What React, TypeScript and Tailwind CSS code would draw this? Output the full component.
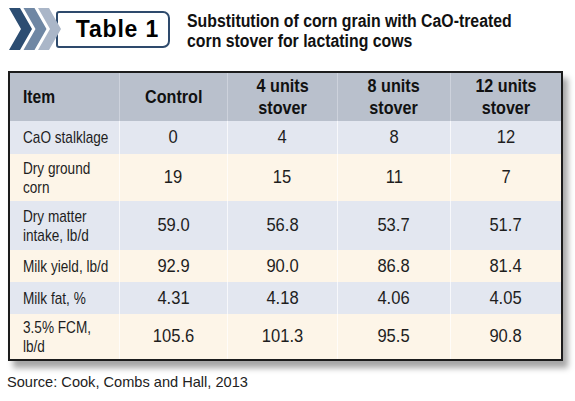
const rows = [
  { item: ["CaO stalklage"], vals: ["0", "4", "8", "12"], h: "h-[33px]", bg: "bg-[#e3e7f0]" },
  { item: ["Dry ground", "corn"], vals: ["19", "15", "11", "7"], h: "h-[47px]", bg: "bg-[#fdf5e8]" },
  { item: ["Dry matter", "intake, lb/d"], vals: ["59.0", "56.8", "53.7", "51.7"], h: "h-[49px]", bg: "bg-[#e3e7f0]" },
  { item: ["Milk yield, lb/d"], vals: ["92.9", "90.0", "86.8", "81.4"], h: "h-[32px]", bg: "bg-[#fdf5e8]" },
  { item: ["Milk fat, %"], vals: ["4.31", "4.18", "4.06", "4.05"], h: "h-[32px]", bg: "bg-[#e3e7f0]" },
  { item: ["3.5% FCM,", "lb/d"], vals: ["105.6", "101.3", "95.5", "90.8"], h: "h-[45px]", bg: "bg-[#fdf5e8]" },
]

const heads = [["Control"], ["4 units", "stover"], ["8 units", "stover"], ["12 units", "stover"]]

const cols = "grid grid-cols-[110px_108px_110px_113px_110px]"

function Chevrons() {
  return (
    <svg width="64" height="44" viewBox="0 0 64 44" className="relative z-10 shrink-0">
      {["#2c4d72", "#6f87a4", "#aab6c8"].map((c, i) => {
        const x = 1 + i * 14.5
        return (
          <polygon
            key={c}
            points={`${x},1 ${x + 11},1 ${x + 23},22 ${x + 11},43 ${x},43 ${x + 12},22`}
            fill={c}
          />
        )
      })}
    </svg>
  )
}

export default function App() {
  return (
    <div className="w-[575px] h-[401px] bg-white overflow-hidden font-['Liberation_Sans',Arial,sans-serif]">
      {/* title banner */}
      <div className="flex items-start pl-[8px] pt-[7px] h-[60px]">
        <Chevrons />
        <div className="-ml-[16px] mt-[4px] w-[114px] h-[37px] border-2 border-[#2e4a6c] rounded-r-[7px] rounded-l-[3px] flex items-center justify-end pr-[9px]">
          <span className="text-[23px] font-bold text-black tracking-[0.8px] leading-none">Table 1</span>
        </div>
        <div className="ml-[17px] mt-[4px] text-[18px] leading-[20px] font-bold text-[#111] whitespace-nowrap scale-x-[0.88] origin-left">
          Substitution of corn grain with CaO-treated
          <br />
          corn stover for lactating cows
        </div>
      </div>

      {/* table */}
      <div className="ml-[8px] mt-[11px] w-[555px] border-2 border-[#1c1c1c] shadow-[5px_7px_6px_rgba(0,0,0,0.35)]">
        <div className={`${cols} h-[48px] bg-[#b9c0cc] text-[#111] font-bold text-[19px] leading-[22px]`}>
          <div className="flex items-center pl-[13px] border-r border-[#cdd2dc]">
            <span className="scale-x-[0.82] origin-left">Item</span>
          </div>
          {heads.map((h, i) => (
            <div key={i} className={`flex items-center justify-center ${i < 3 ? "border-r border-[#cdd2dc]" : ""}`}>
              <div className="flex flex-col items-center text-center whitespace-nowrap scale-x-[0.85]">
                {h.map((l) => (
                  <span key={l}>{l}</span>
                ))}
              </div>
            </div>
          ))}
        </div>
        {rows.map((r, ri) => (
          <div key={ri} className={`${cols} ${r.h} ${r.bg} text-[#1e1e1e]`}>
            <div className="flex items-center pl-[13px] border-r border-white/70">
              <div className="flex flex-col whitespace-nowrap text-[17px] leading-[19px] scale-x-[0.8] origin-left">
                {r.item.map((l) => (
                  <span key={l}>{l}</span>
                ))}
              </div>
            </div>
            {r.vals.map((v, i) => (
              <div key={i} className={`flex items-center justify-center text-[18px] ${i < 3 ? "border-r border-white/70" : ""}`}>
                <span className="scale-x-[0.92]">{v}</span>
              </div>
            ))}
          </div>
        ))}
      </div>

      <p className="ml-[7px] mt-[11px] text-[14.6px] text-[#222]">Source: Cook, Combs and Hall, 2013</p>
    </div>
  )
}
